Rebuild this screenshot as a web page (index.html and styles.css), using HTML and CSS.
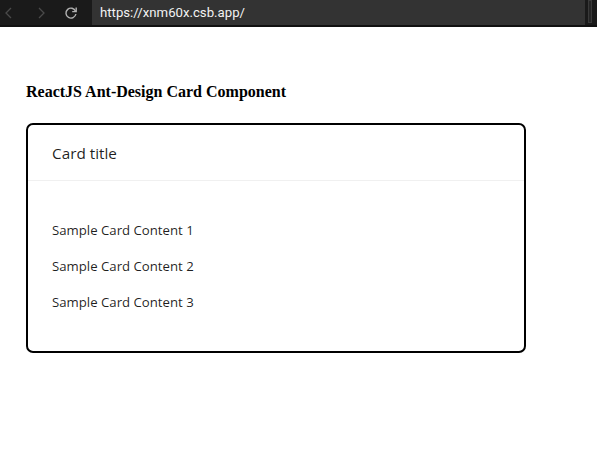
FILE: index.html
```html
<!DOCTYPE html>
<html>
<head>
<meta charset="utf-8">
<link rel="stylesheet" href="styles.css">
</head>
<body>
<div class="chrome">
  <div class="nav">
    <svg class="ico" width="12" height="14" viewBox="0 0 12 14"><path d="M8 2 L3 7 L8 12" fill="none" stroke="#4a4a4a" stroke-width="1.3"/></svg>
    <svg class="ico fwd" width="12" height="14" viewBox="0 0 12 14"><path d="M4 2 L9 7 L4 12" fill="none" stroke="#4a4a4a" stroke-width="1.3"/></svg>
    <svg class="ico reload" width="16" height="16" viewBox="0 0 16 16"><path d="M12.6 6.2 A5 5 0 1 0 12.9 9" fill="none" stroke="#b0b0b0" stroke-width="1.4"/><path d="M13.2 2.6 L13.2 6.6 L9.2 6.6" fill="none" stroke="#b0b0b0" stroke-width="1.4"/></svg>
  </div>
  <div class="url">https://xnm60x.csb.app/</div>
  <div class="side"><div class="knob"></div></div>
</div>
<main class="page">
  <h3 class="heading">ReactJS Ant-Design Card Component</h3>
  <div class="card">
    <div class="card-head">Card title</div>
    <div class="card-body">
      <p>Sample Card Content 1</p>
      <p>Sample Card Content 2</p>
      <p>Sample Card Content 3</p>
    </div>
  </div>
</main>
</body>
</html>
```
FILE: styles.css
```css
html, body { margin: 0; padding: 0; background: #fff; }
body { font-family: "Liberation Serif", serif; }
.chrome {
  display: flex;
  height: 27px;
  background: #1a1a1a;
  border-bottom: 2px solid #111;
  box-sizing: border-box;
}
.nav {
  width: 92px;
  display: flex;
  align-items: center;
  padding-left: 3px;
  box-sizing: border-box;
  height: 25px;
}
.ico { display: block; }
.fwd { margin-left: 20px; }
.reload { margin-left: 16px; }
.url {
  width: 493px;
  height: 25px;
  background: #333;
  color: #f2f2f2;
  font-family: Roboto, "Liberation Sans", sans-serif;
  font-size: 13.2px;
  line-height: 25px;
  padding-left: 8px;
  box-sizing: border-box;
}
.side { flex: 1; padding-left: 3px; }
.knob {
  width: 4px;
  height: 23px;
  border: 1px solid #3a3a3a;
  box-sizing: border-box;
  background: #262626;
}
.page { padding: 0 26px; }
.heading {
  margin: 55px 0 0;
  font-size: 16px;
  font-weight: bold;
  line-height: 19px;
  color: #000;
}
.card {
  margin-top: 22px;
  width: 500px;
  box-sizing: border-box;
  border: 2px solid #000;
  border-radius: 7px;
  font-family: "Open Sans", "Noto Sans", sans-serif;
  color: rgba(0,0,0,0.88);
}
.card-head {
  height: 55px;
  padding: 0 24px;
  display: flex;
  align-items: center;
  font-size: 15.3px;
  border-bottom: 1px solid #f0f0f0;
}
.card-body { padding: 24px; }
.card-body p {
  margin: 14px 0;
  font-size: 13.2px;
  line-height: 22px;
}
```
